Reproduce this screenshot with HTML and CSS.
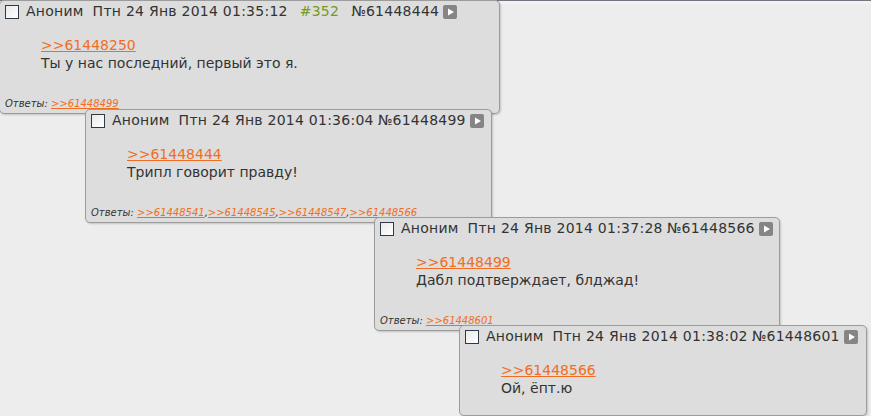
FILE: index.html
```html
<!DOCTYPE html>
<html lang="ru">
<head>
<meta charset="utf-8">
<title>Посты</title>
<link rel="stylesheet" href="styles.css">
</head>
<body>
<div class="topline"></div>
<div class="canvas">

  <div class="post p1">
    <div class="head">
      <span class="chk"></span>
      <span class="name">Аноним</span>
      <span class="date">Птн 24 Янв 2014 01:35:12</span>
      <span class="num">#352</span>
      <span class="pid">№61448444</span>
      <span class="play"><svg viewBox="0 0 14 14" width="14" height="14"><rect x="0" y="0" width="14" height="14" rx="2" fill="#858585"/><path d="M5 3.5 L11 7 L5 10.5 Z" fill="#fff"/></svg></span>
    </div>
    <div class="msg">
      <a class="ref" href="#">&gt;&gt;61448250</a>
      <div class="text">Ты у нас последний, первый это я.</div>
    </div>
    <div class="replies">Ответы: <a href="#">&gt;&gt;61448499</a></div>
  </div>

  <div class="post p2">
    <div class="head">
      <span class="chk"></span>
      <span class="name">Аноним</span>
      <span class="date">Птн 24 Янв 2014 01:36:04</span>
      <span class="pid tight">№61448499</span>
      <span class="play"><svg viewBox="0 0 14 14" width="14" height="14"><rect x="0" y="0" width="14" height="14" rx="2" fill="#858585"/><path d="M5 3.5 L11 7 L5 10.5 Z" fill="#fff"/></svg></span>
    </div>
    <div class="msg">
      <a class="ref" href="#">&gt;&gt;61448444</a>
      <div class="text">Трипл говорит правду!</div>
    </div>
    <div class="replies">Ответы: <a href="#">&gt;&gt;61448541</a>,<a href="#">&gt;&gt;61448545</a>,<a href="#">&gt;&gt;61448547</a>,<a href="#">&gt;&gt;61448566</a></div>
  </div>

  <div class="post p3">
    <div class="head">
      <span class="chk"></span>
      <span class="name">Аноним</span>
      <span class="date">Птн 24 Янв 2014 01:37:28</span>
      <span class="pid tight">№61448566</span>
      <span class="play"><svg viewBox="0 0 14 14" width="14" height="14"><rect x="0" y="0" width="14" height="14" rx="2" fill="#858585"/><path d="M5 3.5 L11 7 L5 10.5 Z" fill="#fff"/></svg></span>
    </div>
    <div class="msg">
      <a class="ref" href="#">&gt;&gt;61448499</a>
      <div class="text">Дабл подтверждает, блджад!</div>
    </div>
    <div class="replies">Ответы: <a href="#">&gt;&gt;61448601</a></div>
  </div>

  <div class="post p4">
    <div class="head">
      <span class="chk"></span>
      <span class="name">Аноним</span>
      <span class="date">Птн 24 Янв 2014 01:38:02</span>
      <span class="pid tight">№61448601</span>
      <span class="play"><svg viewBox="0 0 14 14" width="14" height="14"><rect x="0" y="0" width="14" height="14" rx="2" fill="#858585"/><path d="M5 3.5 L11 7 L5 10.5 Z" fill="#fff"/></svg></span>
    </div>
    <div class="msg">
      <a class="ref" href="#">&gt;&gt;61448566</a>
      <div class="text">Ой, ёпт.ю</div>
    </div>
  </div>

</div>
</body>
</html>
```
FILE: styles.css
```css
html, body {
  margin: 0;
  padding: 0;
  background: #ededed;
  font-family: "DejaVu Sans", Verdana, sans-serif;
  color: #333;
}
.topline {
  height: 1px;
  background: #76747c;
  border-bottom: 3px solid #f1f1f6;
}
.canvas {
  position: relative;
  width: 871px;
  height: 412px;
}
.post {
  position: absolute;
  box-sizing: border-box;
  background: #dddddd;
  border: 1px solid #9c9c9c;
  border-radius: 5px;
  box-shadow: 1px 1px 2px rgba(0,0,0,0.18);
  padding: 3px 0 3px 5px;
}
.p1 { left: -1px; top: -4px; width: 501px; }
.p2 { left: 85px; top: 105px; width: 407px; }
.p3 { left: 374px; top: 213px; width: 406px; }
.p4 { left: 459px; top: 321px; width: 408px; }

.head {
  display: flex;
  align-items: center;
  height: 15px;
  font-size: 14px;
  line-height: 15px;
  letter-spacing: 0.25px;
  white-space: nowrap;
}
.chk {
  width: 12px;
  height: 12px;
  border: 1px solid #2f3a48;
  background: linear-gradient(135deg, #e9e9e9, #ffffff);
  margin-right: 7px;
  flex: none;
}
.name { margin-right: 9px; }
.num { color: #789922; margin-left: 12px; margin-right: 12px; }
.pid.tight { margin-left: 4px; }
.play { margin-left: 4px; display: flex; }

.msg {
  padding: 17px 0 15px 36px;
  font-size: 14px;
  line-height: 18px;
}
.ref {
  color: #f26d21;
  text-decoration: underline;
}
.text { color: #333; }

.replies {
  margin-top: 10px;
  font-size: 10px;
  line-height: 13px;
  font-style: italic;
  color: #333;
}
.replies a {
  color: #f26d21;
  text-decoration: underline;
}
```
